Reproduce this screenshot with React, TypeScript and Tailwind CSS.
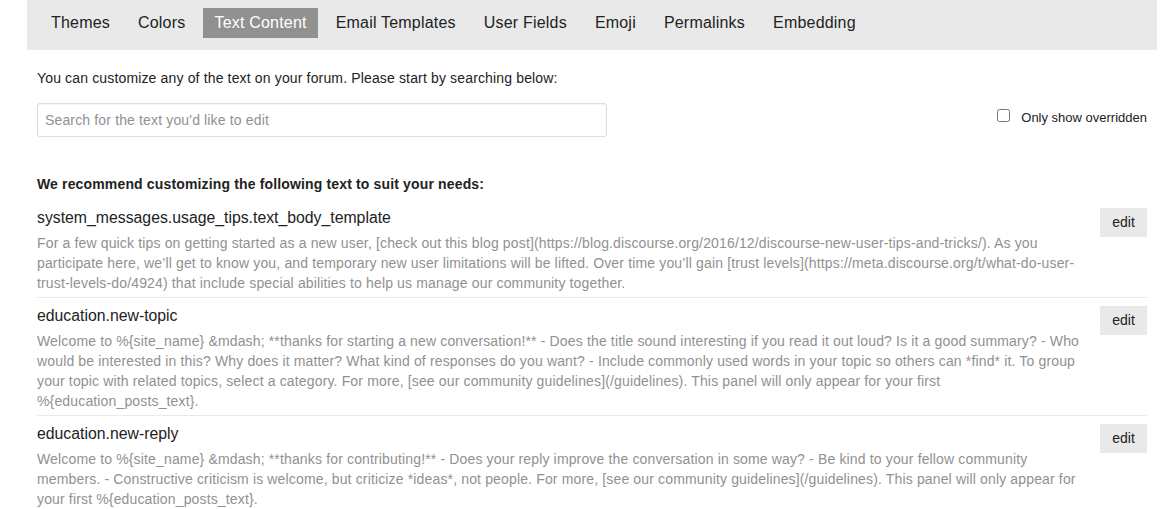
import React from 'react';

const tabs = ['Themes', 'Colors', 'Text Content', 'Email Templates', 'User Fields', 'Emoji', 'Permalinks', 'Embedding'];

// \u2060 keeps "%{...}" from splitting after the percent sign
const entries = [
  {
    key: 'system_messages.usage_tips.text_body_template',
    value:
      "For a few quick tips on getting started as a new user, [check out this blog post](https://blog.discourse.org/2016/12/discourse-new-user-tips-and-tricks/). As you participate here, we\u2019ll get to know you, and temporary new user limitations will be lifted. Over time you\u2019ll gain [trust levels](https://meta.discourse.org/t/what-do-user-trust-levels-do/4924) that include special abilities to help us manage our community together.",
  },
  {
    key: 'education.new-topic',
    value:
      'Welcome to %\u2060{site_name} &mdash; **thanks for starting a new conversation!** - Does the title sound interesting if you read it out loud? Is it a good summary? - Who would be interested in this? Why does it matter? What kind of responses do you want? - Include commonly used words in your topic so others can *find* it. To group your topic with related topics, select a category. For more, [see our community guidelines](/guidelines). This panel will only appear for your first %\u2060{education_posts_text}.',
  },
  {
    key: 'education.new-reply',
    value:
      'Welcome to %\u2060{site_name} &mdash; **thanks for contributing!** - Does your reply improve the conversation in some way? - Be kind to your fellow community members. - Constructive criticism is welcome, but criticize *ideas*, not people. For more, [see our community guidelines](/guidelines). This panel will only appear for your first %\u2060{education_posts_text}.',
  },
];

const App = () => {
  return (
    <main className="min-h-screen bg-white text-[#222] font-['Liberation_Sans',Arial,sans-serif]">
      <div className="mx-[27px] w-[1130px]">
        {/* admin nav */}
        <nav className="h-[50px] bg-[#e9e9e9] pl-[14px] pt-[8px]">
          <ul className="flex gap-[8px]">
            {tabs.map((t) => (
              <li
                key={t}
                className={
                  t === 'Text Content'
                    ? 'h-[30px] px-[11px] text-[16px] leading-[30px] tracking-[0.2px] bg-[#919191] text-white'
                    : 'h-[30px] px-[10px] text-[16px] leading-[30px] tracking-[0.2px] text-[#222]'
                }
              >
                {t}
              </li>
            ))}
          </ul>
        </nav>

        <div className="px-[10px]">
          <p className="mt-[18px] text-[14px] leading-[20px] tracking-[0.15px]">
            You can customize any of the text on your forum. Please start by searching below:
          </p>

          <div className="mt-[15px] flex items-start justify-between">
            <input
              type="text"
              placeholder="Search for the text you'd like to edit"
              className="h-[34px] w-[570px] rounded-[3px] border border-[#ddd] px-[7px] text-[14px] tracking-[0.15px] text-[#222] placeholder:text-[#919191] outline-none shadow-[inset_0_1px_1px_rgba(0,0,0,0.05)]"
            />
            <label className="mt-[7px] flex items-center text-[13px] leading-[16px]">
              <input type="checkbox" className="mr-[11px] h-[13px] w-[13px] -translate-y-[3px] rounded-[2px] accent-[#919191]" />
              Only show overridden
            </label>
          </div>

          <h3 className="mt-[37px] text-[14px] font-bold leading-[20px] tracking-[0.15px]">
            We recommend customizing the following text to suit your needs:
          </h3>

          <div className="mt-[6px]">
            {entries.map((e, i) => (
              <div
                key={e.key}
                className={
                  i < entries.length - 1
                    ? 'flex items-start border-b border-[#e9e9e9] pt-[8px] pb-[4px]'
                    : 'flex items-start pt-[8px] pb-[4px]'
                }
              >
                <div className="flex-1 pr-[12px]">
                  <h4 className="text-[15.8px] leading-[20px] text-[#222]">{e.key}</h4>
                  <p className="mt-[5px] text-[14px] leading-[20px] tracking-[0.15px] text-[#919191]">{e.value}</p>
                </div>
                <button className="h-[29px] w-[47px] bg-[#e9e9e9] text-[14px] text-[#222]">edit</button>
              </div>
            ))}
          </div>
        </div>
      </div>
    </main>
  );
};

export default App;
